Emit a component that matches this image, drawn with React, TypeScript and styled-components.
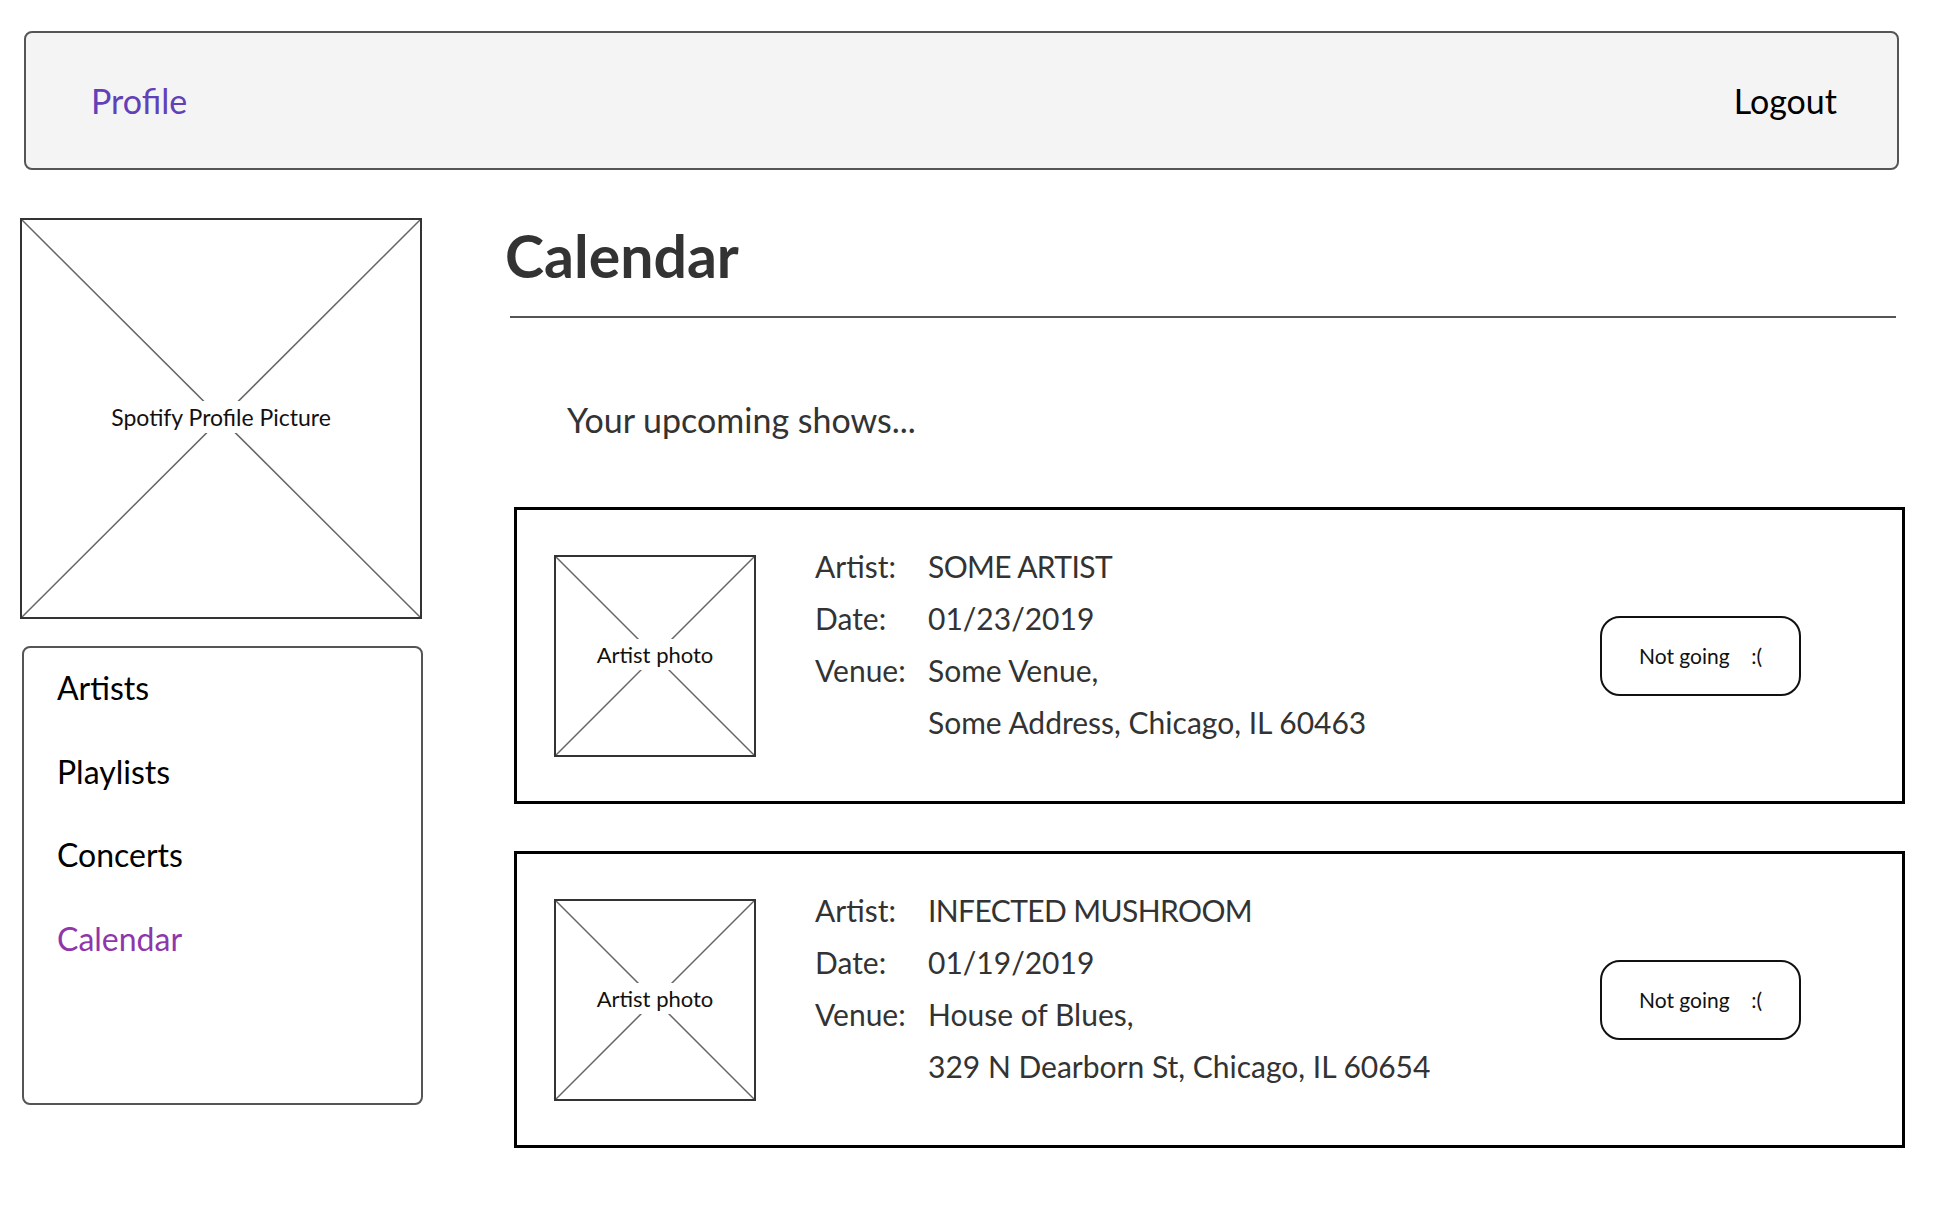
import React from 'react'
import styled, { createGlobalStyle } from 'styled-components'

const GlobalStyle = createGlobalStyle`
  html, body {
    margin: 0;
    padding: 0;
    background: #fff;
  }
  body {
    font-family: Lato, "Open Sans", sans-serif;
    color: #000;
  }
`

const Page = styled.div`
  padding: 31px 41px 40px 20px;
`

const Header = styled.header`
  margin: 0 6px 0 4px;
  height: 139px;
  box-sizing: border-box;
  display: flex;
  align-items: center;
  justify-content: space-between;
  padding: 0 60px 0 65px;
  background: #f4f4f4;
  border: 2px solid #555;
  border-radius: 8px;
`

const HeaderLink = styled.a<{ $accent?: boolean }>`
  font-size: 34px;
  color: ${(p) => (p.$accent ? '#6240b8' : '#000')};
  text-decoration: none;
  cursor: pointer;
`

const Body = styled.div`
  display: flex;
  align-items: flex-start;
  gap: 82px;
  margin-top: 48px;
`

const Sidebar = styled.aside`
  width: 403px;
  flex-shrink: 0;
  display: flex;
  flex-direction: column;
  gap: 27px;
`

const Placeholder = styled.div<{ $w: number; $h: number }>`
  position: relative;
  width: ${(p) => p.$w}px;
  height: ${(p) => p.$h}px;
  box-sizing: border-box;
  border: 2px solid #333;
  display: flex;
  align-items: center;
  justify-content: center;
  flex-shrink: 0;
  background: #fff;

  svg {
    position: absolute;
    inset: 0;
    width: 100%;
    height: 100%;
  }
`

const PlaceholderLabel = styled.span<{ $size: number }>`
  position: relative;
  margin-top: -3px;
  font-size: ${(p) => p.$size}px;
  color: #111;
  background: #fff;
  padding: 2px 3px;
  white-space: nowrap;
`

const Nav = styled.nav`
  margin-left: 2px;
  width: 401px;
  height: 459px;
  box-sizing: border-box;
  border: 2px solid #555;
  border-radius: 8px;
  padding: 21px 0 0 33px;
  display: flex;
  flex-direction: column;
  gap: 45.5px;
`

const NavItem = styled.a<{ $active?: boolean }>`
  font-size: 32px;
  line-height: 38px;
  color: ${(p) => (p.$active ? '#8e36aa' : '#000')};
  text-decoration: none;
  cursor: pointer;
`

const Main = styled.main`
  width: 1400px;
  flex-shrink: 0;
  display: flex;
  flex-direction: column;
`

const Title = styled.h1`
  margin: 4px 0 0;
  font-size: 59px;
  line-height: 67px;
  font-weight: 700;
  color: #333;
`

const Rule = styled.hr`
  margin: 27px 9px 0 5px;
  border: none;
  height: 2px;
  background: #555;
`

const Intro = styled.p`
  margin: 83px 0 0 62px;
  font-size: 34px;
  line-height: 37px;
  color: #333;
`

const Shows = styled.div`
  margin-top: 69px;
  margin-left: 9px;
  display: flex;
  flex-direction: column;
  gap: 47px;
`

const Card = styled.section`
  height: 297px;
  box-sizing: border-box;
  border: 3px solid #000;
  display: flex;
  align-items: center;
  padding: 0 101px 0 37px;
`

const Info = styled.div`
  align-self: flex-start;
  margin-top: 30px;
  margin-left: 59px;
  display: grid;
  grid-template-columns: 113px auto;
  font-size: 30px;
  line-height: 52px;
  color: #333;
`

const Value = styled.span<{ $caps?: boolean }>`
  letter-spacing: ${(p) => (p.$caps ? '-0.6px' : '0')};
`

const Button = styled.button`
  margin-left: auto;
  width: 201px;
  height: 80px;
  border: 2px solid #111;
  border-radius: 20px;
  background: #fff;
  font-family: Lato, "Open Sans", sans-serif;
  font-size: 21px;
  color: #111;
  white-space: pre;
  cursor: pointer;
`

const Cross = () => (
  <svg viewBox="0 0 100 100" preserveAspectRatio="none">
    <line x1="0" y1="0" x2="100" y2="100" stroke="#666" strokeWidth="1.5" vectorEffect="non-scaling-stroke" />
    <line x1="100" y1="0" x2="0" y2="100" stroke="#666" strokeWidth="1.5" vectorEffect="non-scaling-stroke" />
  </svg>
)

const shows = [
  {
    artist: 'SOME ARTIST',
    date: '01/23/2019',
    venue: 'Some Venue,',
    address: 'Some Address, Chicago, IL 60463',
  },
  {
    artist: 'INFECTED MUSHROOM',
    date: '01/19/2019',
    venue: 'House of Blues,',
    address: '329 N Dearborn St, Chicago, IL 60654',
  },
]

export default function App() {
  return (
    <Page>
      <GlobalStyle />
      <Header>
        <HeaderLink $accent>Profile</HeaderLink>
        <HeaderLink>Logout</HeaderLink>
      </Header>

      <Body>
        <Sidebar>
          <Placeholder $w={402} $h={401}>
            <Cross />
            <PlaceholderLabel $size={23}>Spotify Profile Picture</PlaceholderLabel>
          </Placeholder>
          <Nav>
            <NavItem>Artists</NavItem>
            <NavItem>Playlists</NavItem>
            <NavItem>Concerts</NavItem>
            <NavItem $active>Calendar</NavItem>
          </Nav>
        </Sidebar>

        <Main>
          <Title>Calendar</Title>
          <Rule />
          <Intro>Your upcoming shows...</Intro>
          <Shows>
            {shows.map((s) => (
              <Card key={s.artist}>
                <Placeholder $w={202} $h={202}>
                  <Cross />
                  <PlaceholderLabel $size={22}>Artist photo</PlaceholderLabel>
                </Placeholder>
                <Info>
                  <span>Artist:</span>
                  <Value $caps>{s.artist}</Value>
                  <span>Date:</span>
                  <Value>{s.date}</Value>
                  <span>Venue:</span>
                  <Value>{s.venue}</Value>
                  <span />
                  <Value>{s.address}</Value>
                </Info>
                <Button>{'Not going    :('}</Button>
              </Card>
            ))}
          </Shows>
        </Main>
      </Body>
    </Page>
  )
}
